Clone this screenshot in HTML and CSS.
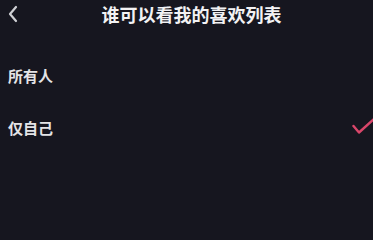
FILE: index.html
```html
<!DOCTYPE html>
<html lang="zh">
<head>
<meta charset="utf-8">
<link rel="stylesheet" href="styles.css">
</head>
<body>
<div class="screen">
  <header class="topbar">
    <span class="back">
      <svg width="12" height="18" viewBox="0 0 12 18"><polyline points="9,2 3,9 9,16" fill="none" stroke="#cfd0d4" stroke-width="2.2" stroke-linecap="round" stroke-linejoin="round"/></svg>
    </span>
    <h1 class="title">谁可以看我的喜欢列表</h1>
  </header>
  <ul class="options">
    <li class="option">所有人</li>
    <li class="option">仅自己
      <svg class="check" width="22" height="18" viewBox="0 0 22 18"><polyline points="1.5,9 7,15.5 22,2" fill="none" stroke="#d9466a" stroke-width="2.4" stroke-linecap="round" stroke-linejoin="round"/></svg>
    </li>
  </ul>
</div>
</body>
</html>
```
FILE: styles.css
```css
html, body {
  margin: 0;
  padding: 0;
  background: #16161f;
  overflow: hidden;
}
.screen {
  width: 373px;
  height: 234px;
  background: #16161f;
  font-family: "Noto Sans CJK SC", "Noto Sans", sans-serif;
  color: #e6e6e8;
}
.topbar {
  height: 28px;
  display: flex;
  align-items: center;
}
.back {
  display: flex;
  align-items: center;
  margin-left: 7px;
  width: 12px;
  height: 18px;
}
.title {
  margin: 0;
  flex: 1;
  text-align: center;
  font-size: 18px;
  line-height: 28px;
  font-weight: 700;
  color: #f2f2f4;
  padding-right: 9px;
}
.options {
  list-style: none;
  margin: 21px 0 0;
  padding: 0;
}
.option {
  height: 52px;
  display: flex;
  align-items: center;
  justify-content: space-between;
  padding-left: 8px;
  font-size: 15px;
  font-weight: 700;
  color: #e4e4e6;
}
.check {
  margin-right: -1px;
  margin-top: -3px;
}
```
